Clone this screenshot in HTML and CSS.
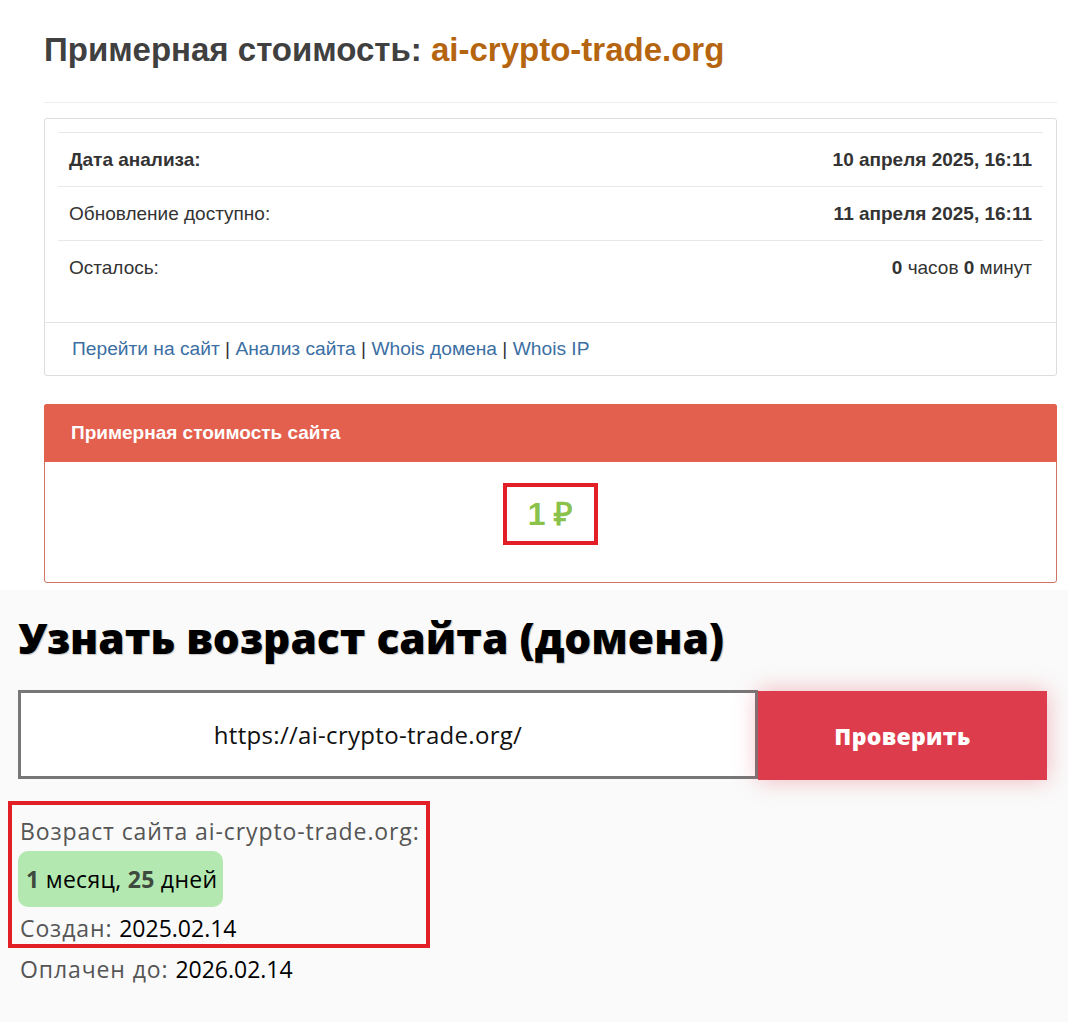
FILE: index.html
```html
<!DOCTYPE html>
<html lang="ru">
<head>
<meta charset="utf-8">
<title>Примерная стоимость: ai-crypto-trade.org</title>
<link rel="stylesheet" href="styles.css">
</head>
<body>
<section class="estimate">
  <h1 class="title">Примерная стоимость: <span class="domain">ai-crypto-trade.org</span></h1>
  <hr class="divider">
  <div class="panel">
    <div class="panel-body">
      <table class="info">
        <tr><th class="label-strong">Дата анализа:</th><td class="val"><b>10 апреля 2025, 16:11</b></td></tr>
        <tr><th>Обновление доступно:</th><td class="val"><b>11 апреля 2025, 16:11</b></td></tr>
        <tr><th>Осталось:</th><td class="val"><b>0</b> часов <b>0</b> минут</td></tr>
      </table>
    </div>
    <div class="panel-footer">
      <a href="#">Перейти на сайт</a> | <a href="#">Анализ сайта</a> | <a href="#">Whois домена</a> | <a href="#">Whois IP</a>
    </div>
  </div>
  <div class="panel danger">
    <div class="danger-head">Примерная стоимость сайта</div>
    <div class="danger-body">
      <span class="price">1 ₽</span>
    </div>
  </div>
</section>
<section class="age">
  <h2 class="age-title">Узнать возраст сайта (домена)</h2>
  <form class="check">
    <input class="url" type="text" value="https://ai-crypto-trade.org/">
    <button class="btn" type="button">Проверить</button>
  </form>
  <div class="result">
    <div class="line">Возраст сайта ai-crypto-trade.org:</div>
    <div class="pill"><b>1</b> месяц, <b>25</b> дней</div>
    <div class="line">Создан: <span class="date">2025.02.14</span></div>
  </div>
  <div class="line paid">Оплачен до: <span class="date">2026.02.14</span></div>
</section>
</body>
</html>
```
FILE: styles.css
```css
html, body {
  margin: 0;
  padding: 0;
  background: #fff;
}

.estimate {
  padding: 32px 11px 7px 44px;
  font-family: "Liberation Sans", Arial, sans-serif;
  color: #333;
}

.title {
  margin: 0;
  font-size: 33px;
  line-height: 36px;
  font-weight: bold;
  color: #404040;
}

.domain {
  color: #b5650f;
}

.divider {
  margin: 34px 0 15px;
  border: 0;
  border-top: 1px solid #eee;
  height: 0;
}

.panel {
  border: 1px solid #ddd;
  border-radius: 3px;
  background: #fff;
  margin-bottom: 28px;
}

.panel-body {
  padding: 13px 13px 28px;
}

.info {
  width: 100%;
  border-collapse: collapse;
  font-size: 19px;
}

.info th,
.info td {
  height: 53px;
  padding: 0 11px;
  border-top: 1px solid #e8e8e8;
  text-align: left;
  font-weight: normal;
}

.info th.label-strong {
  font-weight: bold;
}

.info td.val {
  text-align: right;
}

.panel-footer {
  border-top: 1px solid #e3e3e3;
  height: 52px;
  line-height: 52px;
  padding-left: 27px;
  font-size: 19.2px;
  color: #333;
}

.panel-footer a {
  color: #3c6fa3;
  text-decoration: none;
}

.panel.danger {
  border-color: #cf7465;
  margin-bottom: 0;
}

.danger-head {
  background: #e3604f;
  color: #fff;
  font-weight: bold;
  font-size: 19px;
  height: 58px;
  line-height: 58px;
  padding-left: 27px;
  margin: -1px -1px 0;
  border-radius: 3px 3px 0 0;
}

.danger-body {
  padding: 21px 0 37px;
  text-align: center;
}

.price {
  display: inline-block;
  box-sizing: border-box;
  width: 95px;
  height: 62px;
  line-height: 54px;
  border: 4px solid #e21f26;
  color: #8bc24c;
  font-weight: bold;
  font-size: 32px;
}

.age {
  background: #fafafa;
  padding: 26px 21px 40px 18px;
  font-family: "Open Sans", "DejaVu Sans", sans-serif;
  color: #555;
}

.age-title {
  margin: 0 0 30px;
  font-size: 42.5px;
  line-height: 44px;
  font-weight: 800;
  color: #000;
  text-shadow: 1px 1px 1px rgba(0, 0, 0, 0.22);
}

.check {
  display: flex;
  margin: 0 0 21px;
}

.url {
  flex: 1;
  box-sizing: border-box;
  height: 89px;
  border: 3px solid #777;
  background: #fff;
  text-align: center;
  padding: 0 40px 0 0;
  font-family: inherit;
  font-size: 24px;
  letter-spacing: 0.3px;
  color: #111;
  outline: none;
}

.btn {
  width: 289px;
  height: 89px;
  margin-top: 1px;
  border: 0;
  background: #dd3c4c;
  color: #fff;
  font-family: inherit;
  font-weight: 800;
  font-size: 23px;
  letter-spacing: 0.3px;
  box-shadow: 0 0 22px rgba(221, 60, 76, 0.35);
}

.result {
  margin-left: -10px;
  width: 422px;
  box-sizing: border-box;
  border: 4px solid #e21f26;
  padding: 11px 6px 1px;
}

.line {
  font-size: 23px;
  letter-spacing: 0.9px;
  line-height: 30px;
  padding-left: 2px;
  color: #555;
}

.date {
  color: #000;
  letter-spacing: 0;
}

.pill {
  display: block;
  width: max-content;
  margin: 5px 0 6px;
  height: 56px;
  line-height: 56px;
  padding: 0 6px 0 8px;
  border-radius: 10px;
  background: #b3e9b0;
  font-size: 23px;
  letter-spacing: 0.3px;
  color: #000;
}

.pill b {
  color: #3f4a3f;
}

.paid {
  margin-top: 6px;
}
```
